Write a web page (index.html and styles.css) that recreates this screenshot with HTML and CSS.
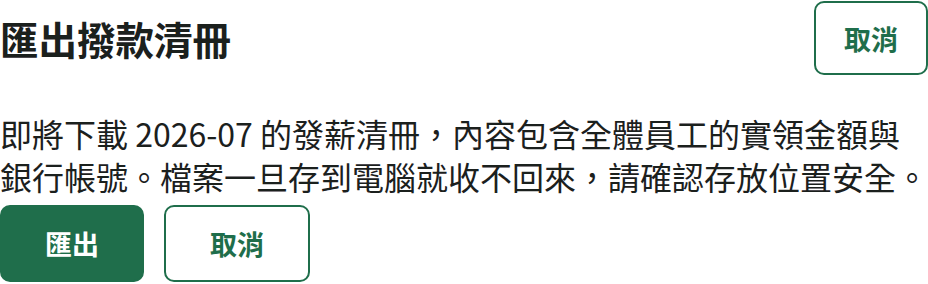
FILE: index.html
```html
<!DOCTYPE html>
<html lang="zh-Hant">
<head>
    <meta charset="UTF-8">
    <meta name="viewport" content="width=device-width, initial-scale=1.0">
    <title>匯出撥款清冊</title>
    <link rel="stylesheet" href="styles.css">
</head>
<body>
    <section class="dialog">
        <header class="dialog-header">
            <h1>匯出撥款清冊</h1>
            <button class="btn btn-outline btn-close">取消</button>
        </header>
        <p class="dialog-text">即將下載 2026-07 的發薪清冊，內容包含全體員工的實領金額與銀行帳號。檔案一旦存到電腦就收不回來，請確認存放位置安全。</p>
        <div class="dialog-actions">
            <button class="btn btn-primary">匯出</button>
            <button class="btn btn-outline">取消</button>
        </div>
    </section>
</body>
</html>
```

FILE: styles.css
```css
/* General */
body {
    margin: 0;
    padding: 0;
    background: #fff;
    color: #1b201d;
    font-family: "Noto Sans CJK TC", "Noto Sans", sans-serif;
}

.dialog {
    width: 928px;
}

/* Header */
.dialog-header {
    display: flex;
    justify-content: space-between;
    align-items: center;
    padding-top: 1px;
}

.dialog-header h1 {
    margin: 0;
    font-size: 38.5px;
    font-weight: 700;
    line-height: 1.3;
}

/* Body text */
.dialog-text {
    margin: 37px 0 0;
    font-size: 32px;
    line-height: 43px;
}

/* Buttons */
.dialog-actions {
    display: flex;
    gap: 20px;
    margin-top: 7px;
}

.btn {
    font-family: inherit;
    font-size: 27px;
    font-weight: 700;
    height: 77px;
    padding: 0 43px;
    border: 2px solid #1f6e4b;
    border-radius: 10px;
    cursor: pointer;
}

.btn-primary {
    background: #1f6e4b;
    color: #fff;
}

.btn-outline {
    background: #fff;
    color: #1f6e4b;
}

.dialog-actions .btn-outline {
    padding: 0 44px;
}

.btn-close {
    height: 74px;
    padding: 0 28px;
}
```
